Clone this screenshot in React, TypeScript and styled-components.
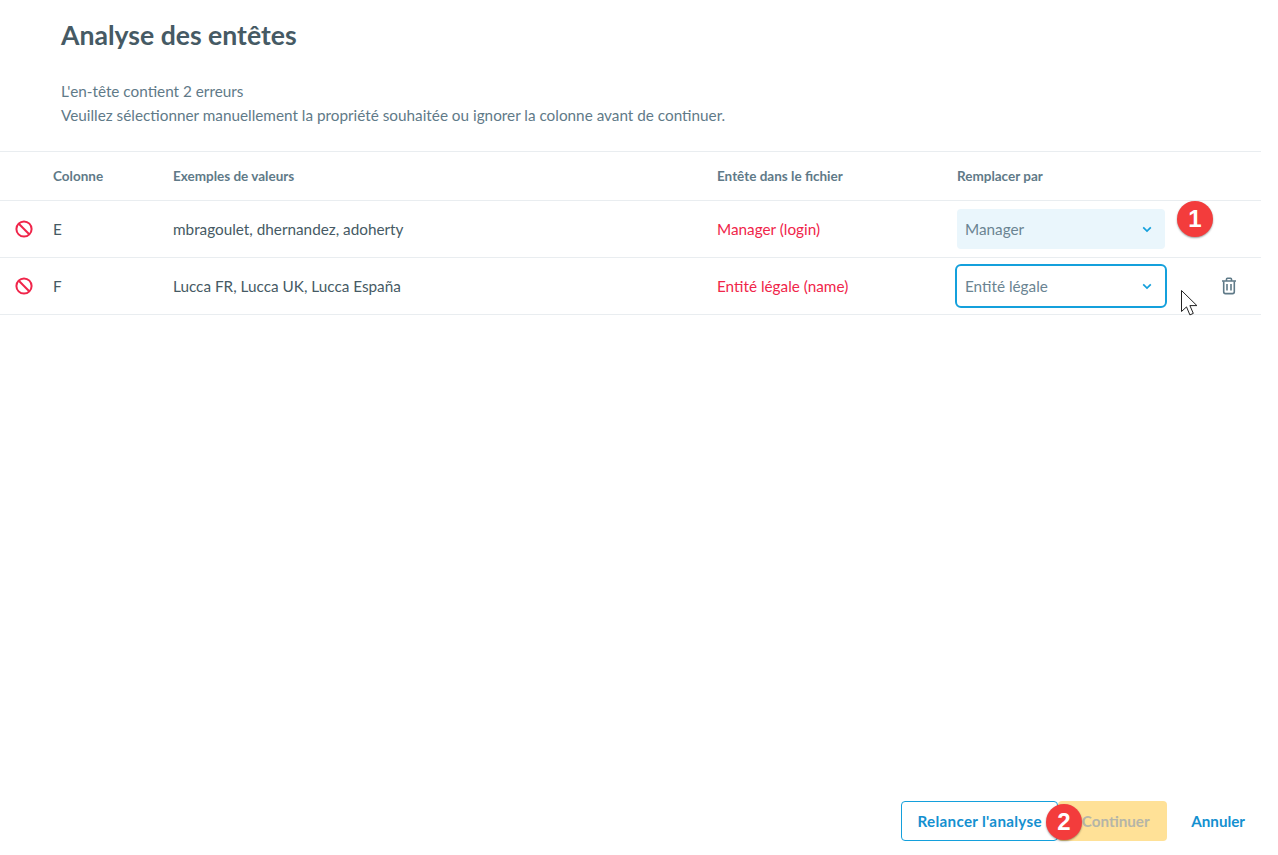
import React from "react";
import styled, { createGlobalStyle } from "styled-components";

const Global = createGlobalStyle`
  html, body { margin: 0; padding: 0; background: #fff; }
  body { font-family: "Lato", "Open Sans", sans-serif; }
`;

const Page = styled.div`
  position: relative;
  width: 1261px;
  height: 855px;
  display: flex;
  flex-direction: column;
  overflow: hidden;
`;

const Header = styled.header`
  padding: 19px 0 0 61px;
  height: 151px;
  box-sizing: border-box;
`;

const Title = styled.h1`
  margin: 0;
  font-size: 26.6px;
  line-height: 33px;
  font-weight: 700;
  color: #465a64;
`;

const Intro = styled.p`
  margin: 27px 0 0;
  font-size: 15.3px;
  line-height: 24px;
  color: #5f7a88;
`;

const Grid = styled.div`
  display: grid;
  grid-template-columns: 53px 120px 544px 240px 1fr;
  align-items: center;
  border-bottom: 1px solid #e9edf0;
`;

const HeadRow = styled(Grid)`
  height: 50px;
  border-top: 1px solid #e9edf0;
  box-sizing: border-box;
`;

const Row = styled(Grid)`
  height: 57px;
  box-sizing: border-box;
`;

const HeadCell = styled.div`
  font-size: 13.5px;
  font-weight: 700;
  color: #5f7a88;
`;

const Cell = styled.div`
  font-size: 15.3px;
  color: #465a64;
`;

const ErrorCell = styled(Cell)`
  color: #f0254a;
`;

const IconCell = styled.div`
  display: flex;
  padding-left: 15px;
`;

const ActionCell = styled.div`
  display: flex;
  align-items: center;
  position: relative;
`;

const Select = styled.div<{ $focused?: boolean }>`
  width: 208px;
  height: 40px;
  box-sizing: border-box;
  border-radius: 4px;
  display: flex;
  align-items: center;
  justify-content: space-between;
  padding: 0 13px 0 8px;
  font-size: 15.3px;
  color: #6a8492;
  background: ${(p) => (p.$focused ? "#fff" : "#eaf6fc")};
  ${(p) => (p.$focused ? "outline: 2px solid #14a0dc; outline-offset: 0;" : "")}
`;

const Trash = styled.div`
  display: flex;
  margin-left: 56px;
`;

const Footer = styled.footer`
  margin-top: auto;
  height: 54px;
  display: flex;
  align-items: flex-start;
  justify-content: flex-end;
  padding-right: 16px;
`;

const OutlineButton = styled.div`
  width: 157px;
  height: 40px;
  box-sizing: border-box;
  border: 1px solid #14a0dc;
  border-radius: 4px;
  color: #1490d0;
  font-size: 15.2px;
  letter-spacing: 0.3px;
  font-weight: 700;
  display: flex;
  align-items: center;
  justify-content: center;
`;

const DisabledButton = styled.div`
  width: 109px;
  height: 40px;
  box-sizing: border-box;
  padding-left: 6px;
  background: #ffe197;
  border-radius: 4px;
  color: #b5b5a8;
  font-size: 15.2px;
  font-weight: 700;
  display: flex;
  align-items: center;
  justify-content: center;
`;

const TextButton = styled.div`
  margin-left: 24px;
  height: 40px;
  color: #1490d0;
  font-size: 15.2px;
  font-weight: 700;
  display: flex;
  align-items: center;
`;

const Badge = styled.div<{ $x: number; $y: number }>`
  position: absolute;
  left: ${(p) => p.$x}px;
  top: ${(p) => p.$y}px;
  width: 36px;
  height: 36px;
  border-radius: 50%;
  background: #f33c3c;
  color: #fff;
  font-family: "Liberation Sans", sans-serif;
  font-size: 24px;
  font-weight: 700;
  display: flex;
  align-items: center;
  justify-content: center;
  box-shadow: 0 1px 2px rgba(0, 0, 0, 0.4);
`;

const Cursor = styled.svg`
  position: absolute;
  left: 1180px;
  top: 289px;
`;

const BanIcon = () => (
  <svg width="18" height="18" viewBox="0 0 18 18" fill="none" stroke="#f0254a" strokeWidth="2">
    <circle cx="9" cy="9" r="7.6" />
    <path d="M3.8 3.8 14.2 14.2" />
  </svg>
);

const Chevron = () => (
  <svg width="10" height="7" viewBox="0 0 10 7" fill="none" stroke="#14a0dc" strokeWidth="1.7">
    <path d="M1.2 1.3 5 5l3.8-3.7" />
  </svg>
);

const TrashIcon = () => (
  <svg width="16" height="18" viewBox="0 0 16 18" fill="none" stroke="#5f7a88" strokeWidth="1.6">
    <path d="M1 4h14M5.5 4V2.2c0-.5.4-.9.9-.9h3.2c.5 0 .9.4.9.9V4" />
    <path d="M2.7 4.2v10.6c0 1 .8 1.8 1.8 1.8h7c1 0 1.8-.8 1.8-1.8V4.2" />
    <path d="M6 7v6.5M10 7v6.5" />
  </svg>
);

const rows = [
  { col: "E", values: "mbragoulet, dhernandez, adoherty", header: "Manager (login)", sel: "Manager", focused: false },
  { col: "F", values: "Lucca FR, Lucca UK, Lucca España", header: "Entité légale (name)", sel: "Entité légale", focused: true },
];

export default function App() {
  return (
    <Page>
      <Global />
      <Header>
        <Title>Analyse des entêtes</Title>
        <Intro>
          L'en-tête contient 2 erreurs
          <br />
          Veuillez sélectionner manuellement la propriété souhaitée ou ignorer la colonne avant de continuer.
        </Intro>
      </Header>
      <HeadRow>
        <div />
        <HeadCell>Colonne</HeadCell>
        <HeadCell>Exemples de valeurs</HeadCell>
        <HeadCell>Entête dans le fichier</HeadCell>
        <HeadCell>Remplacer par</HeadCell>
      </HeadRow>
      {rows.map((r) => (
        <Row key={r.col}>
          <IconCell>
            <BanIcon />
          </IconCell>
          <Cell>{r.col}</Cell>
          <Cell>{r.values}</Cell>
          <ErrorCell>{r.header}</ErrorCell>
          <ActionCell>
            <Select $focused={r.focused}>
              {r.sel}
              <Chevron />
            </Select>
            {r.focused && (
              <Trash>
                <TrashIcon />
              </Trash>
            )}
          </ActionCell>
        </Row>
      ))}
      <Footer>
        <OutlineButton>Relancer l'analyse</OutlineButton>
        <DisabledButton>Continuer</DisabledButton>
        <TextButton>Annuler</TextButton>
      </Footer>
      <Badge $x={1177} $y={201}>1</Badge>
      <Badge $x={1046} $y={804}>2</Badge>
      <Cursor width="20" height="28" viewBox="0 0 20 28">
        <path d="M1.5 1.5v21l5-4.6 3.4 8 3.4-1.5-3.4-7.8h7z" fill="#fff" stroke="#222" strokeWidth="1" />
      </Cursor>
    </Page>
  );
}
